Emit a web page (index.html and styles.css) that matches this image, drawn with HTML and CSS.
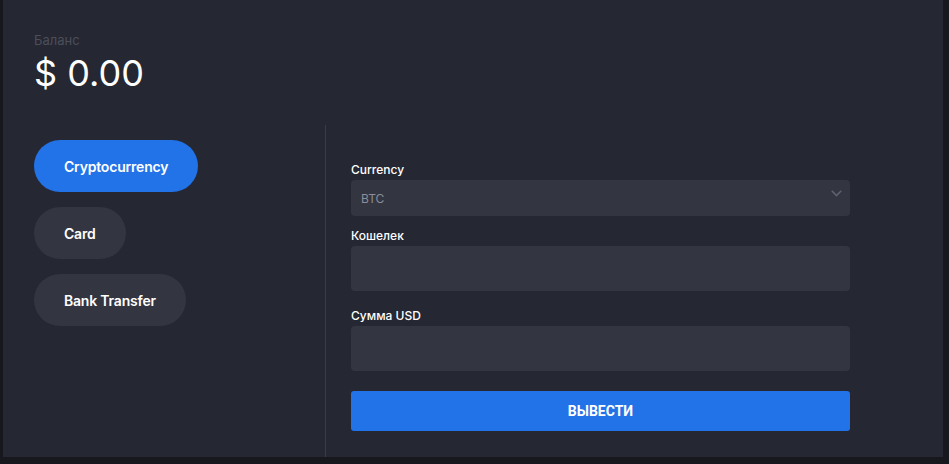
FILE: index.html
```html
<!DOCTYPE html>
<html lang="ru">
<head>
<meta charset="utf-8">
<title>Вывод</title>
<link rel="stylesheet" href="styles.css">
</head>
<body>
<div class="panel">
  <div class="balance">
    <div class="balance-label">Баланс</div>
    <div class="balance-value">$ 0.00</div>
  </div>
  <div class="content">
    <div class="methods">
      <button class="method active">Cryptocurrency</button>
      <button class="method">Card</button>
      <button class="method">Bank Transfer</button>
    </div>
    <div class="form-col">
      <form class="form">
        <label class="label">Currency</label>
        <div class="select">
          <span class="select-value">BTC</span>
          <svg class="chevron" width="11" height="7" viewBox="0 0 11 7"><path d="M0.8 0.8 L5.5 5.5 L10.2 0.8" fill="none" stroke="#5f6270" stroke-width="1.6"/></svg>
        </div>
        <label class="label label-wallet">Кошелек</label>
        <div class="input"></div>
        <label class="label label-sum">Сумма USD</label>
        <div class="input"></div>
        <button type="button" class="submit">ВЫВЕСТИ</button>
      </form>
    </div>
  </div>
</div>
</body>
</html>
```

FILE: styles.css
```css
* { box-sizing: border-box; }
html, body {
  margin: 0;
  padding: 0;
  background: #17171e;
  height: 100%;
}
body {
  font-family: Inter, "Noto Sans", sans-serif;
  color: #fff;
}
.panel {
  margin-left: 3px;
  width: 940px;
  height: 457px;
  background: #252733;
  display: flex;
  flex-direction: column;
}
.balance {
  padding: 32px 31px 0;
  height: 125px;
}
.balance-label {
  font-size: 13px;
  line-height: 16px;
  color: #4b4e5b;
}
.balance-value {
  font-size: 36px;
  line-height: 44px;
  margin-top: 3px;
  font-weight: 400;
  color: #fff;
}
.content {
  flex: 1;
  display: flex;
}
.methods {
  width: 323px;
  border-right: 1px solid #3a3c48;
  padding: 15px 0 0 31px;
  display: flex;
  flex-direction: column;
  align-items: flex-start;
  gap: 15px;
}
.method {
  font-family: Inter, sans-serif;
  font-size: 14px;
  font-weight: 600;
  letter-spacing: -0.2px;
  color: #fff;
  background: #333541;
  border: none;
  border-radius: 26px;
  height: 52px;
  padding: 0 30px;
  cursor: pointer;
}
.method.active {
  background: #2272e8;
}
.form-col {
  flex: 1;
  padding: 37px 0 0 25px;
}
.form {
  width: 499px;
  display: flex;
  flex-direction: column;
}
.label {
  font-size: 12px;
  line-height: 16px;
  font-weight: 500;
  color: #fff;
  margin-bottom: 2px;
}
.label-wallet { margin-top: 12px; }
.label-sum { margin-top: 17px; }
.select {
  height: 36px;
  background: #333541;
  border-radius: 4px;
  display: flex;
  align-items: center;
  justify-content: space-between;
  padding: 0 8px 0 10px;
}
.select-value {
  font-size: 12px;
  color: #8b8d99;
}
.chevron {
  align-self: flex-start;
  margin-top: 10px;
}
.input {
  height: 45px;
  background: #333541;
  border-radius: 4px;
}
.submit {
  margin-top: 20px;
  height: 40px;
  background: #2272e8;
  border: none;
  border-radius: 3px;
  color: #fff;
  font-family: Roboto, Inter, sans-serif;
  font-weight: 700;
  font-size: 14px;
  cursor: pointer;
}
```
